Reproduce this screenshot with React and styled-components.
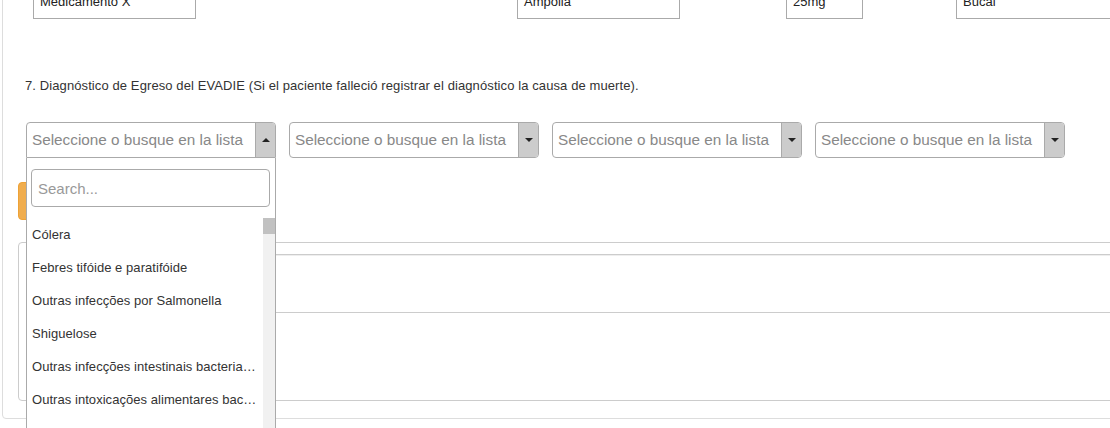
import React from "react";
import styled, { createGlobalStyle } from "styled-components";

const GlobalStyle = createGlobalStyle`
  html, body {
    margin: 0;
    padding: 0;
    background: #fff;
  }
  body {
    font-family: "Liberation Sans", Arial, Helvetica, sans-serif;
    color: #333;
  }
  * {
    box-sizing: border-box;
  }
`;

const meds = [
  { text: "Medicamento X", width: 163, offset: 15 },
  { text: "Ampolla", width: 163, offset: 321 },
  { text: "25mg", width: 77, offset: 106 },
  { text: "Bucal", width: 200, offset: 93 },
];

const options = [
  "Cólera",
  "Febres tifóide e paratifóide",
  "Outras infecções por Salmonella",
  "Shiguelose",
  "Outras infecções intestinais bacterianas",
  "Outras intoxicações alimentares bacterianas",
  "Amebíase",
];

const App = () => {
  return (
    <Page>
      <GlobalStyle />
      <OuterPanel>
        <MedRow>
          {meds.map((m) => (
            <MedBox key={m.text} $width={m.width} $offset={m.offset}>
              {m.text}
            </MedBox>
          ))}
        </MedRow>

        <Label>
          7. Diagnóstico de Egreso del EVADIE (Si el paciente falleció registrar
          el diagnóstico la causa de muerte).
        </Label>

        <SelectRow>
          {[0, 1, 2, 3].map((i) => (
            <Select key={i} $open={i === 0}>
              <SelectText>Seleccione o busque en la lista</SelectText>
              <ArrowBox $open={i === 0}>
                <Caret $up={i === 0} />
              </ArrowBox>
              {i === 0 && (
                <Dropdown>
                  <SearchWrap>
                    <SearchInput placeholder="Search..." readOnly />
                  </SearchWrap>
                  <ListWrap>
                    <Options>
                      {options.map((o) => (
                        <Option key={o}>{o}</Option>
                      ))}
                    </Options>
                    <Scrollbar>
                      <Thumb />
                    </Scrollbar>
                  </ListWrap>
                </Dropdown>
              )}
            </Select>
          ))}
        </SelectRow>

        <ActionButton>Agregar</ActionButton>

        <InnerPanel>
          <InnerHead />
          <InnerRow />
          <InnerBody />
        </InnerPanel>
      </OuterPanel>
    </Page>
  );
};

export default App;

const Page = styled.div`
  height: 428px;
  overflow: hidden;
`;

const OuterPanel = styled.div`
  margin: -40px 0 0 2px;
  width: 1140px;
  border: 1px solid #ddd;
  border-radius: 4px;
  padding: 24px 15px 17px;
`;

const MedRow = styled.div`
  display: flex;
  align-items: flex-start;
`;

const MedBox = styled.div`
  flex-shrink: 0;
  width: ${(p) => p.$width}px;
  margin-left: ${(p) => p.$offset}px;
  height: 34px;
  border: 1px solid #aaa;
  padding: 0 6px;
  font-size: 13px;
  line-height: 32px;
  color: #222;
  white-space: nowrap;
`;

const Label = styled.div`
  margin-top: 58px;
  padding-left: 7px;
  font-size: 13px;
  letter-spacing: 0.1px;
  line-height: 17px;
  color: #333;
`;

const SelectRow = styled.div`
  display: grid;
  grid-template-columns: repeat(4, 250px);
  column-gap: 13px;
  margin-top: 28px;
  padding-left: 8px;
`;

const Select = styled.div`
  position: relative;
  display: flex;
  height: 36px;
  border: 1px solid #aaa;
  border-radius: ${(p) => (p.$open ? "4px 4px 0 0" : "4px")};
  background: #fff;
`;

const SelectText = styled.div`
  flex: 1;
  min-width: 0;
  padding-left: 5px;
  font-size: 15.3px;
  line-height: 34px;
  color: #888;
  white-space: nowrap;
  overflow: hidden;
`;

const ArrowBox = styled.div`
  width: 20px;
  display: flex;
  align-items: center;
  justify-content: center;
  border-left: 1px solid #aaa;
  background: #ccc;
  border-radius: ${(p) => (p.$open ? "0 3px 0 0" : "0 3px 3px 0")};
`;

const Caret = styled.span`
  width: 0;
  height: 0;
  border-left: 4px solid transparent;
  border-right: 4px solid transparent;
  ${(p) =>
    p.$up ? "border-bottom: 4px solid #222;" : "border-top: 4px solid #222;"}
`;

const Dropdown = styled.div`
  position: absolute;
  top: calc(100% + 1px);
  left: -1px;
  right: -1px;
  border: 1px solid #aaa;
  border-top: none;
  background: #fff;
  z-index: 10;
`;

const SearchWrap = styled.div`
  padding: 11px 5px 11px 4px;
`;

const SearchInput = styled.input`
  display: block;
  width: 100%;
  height: 38px;
  border: 1px solid #aaa;
  border-radius: 4px;
  padding: 0 6px;
  font-family: "Liberation Sans", Arial, sans-serif;
  font-size: 15px;
  color: #333;
  outline: none;

  &::placeholder {
    color: #999;
  }
`;

const ListWrap = styled.div`
  display: flex;
  height: 260px;
`;

const Options = styled.div`
  flex: 1;
  min-width: 0;
`;

const Option = styled.div`
  height: 33px;
  line-height: 33px;
  padding: 0 5px;
  font-size: 13px;
  letter-spacing: 0.05px;
  color: #333;
  white-space: nowrap;
  overflow: hidden;
  text-overflow: ellipsis;
`;

const Scrollbar = styled.div`
  width: 12px;
  background: #f1f1f1;
`;

const Thumb = styled.div`
  height: 16px;
  background: #c1c1c1;
`;

const ActionButton = styled.button`
  display: block;
  margin-top: 24px;
  width: 90px;
  height: 38px;
  background: #f0ad4e;
  border: 1px solid #eea236;
  border-radius: 4px;
  color: #fff;
  font-family: "Liberation Sans", Arial, sans-serif;
  font-size: 14px;
`;

const InnerPanel = styled.div`
  margin-top: 22px;
  border: 1px solid #ccc;
  border-radius: 4px;
`;

const InnerHead = styled.div`
  height: 12px;
  margin-left: 8px;
  border-bottom: 1px solid #ccc;
  box-shadow: 0 1px 0 #eee;
`;

const InnerRow = styled.div`
  height: 58px;
  margin-left: 8px;
  border-bottom: 1px solid #ccc;
`;

const InnerBody = styled.div`
  height: 87px;
`;
